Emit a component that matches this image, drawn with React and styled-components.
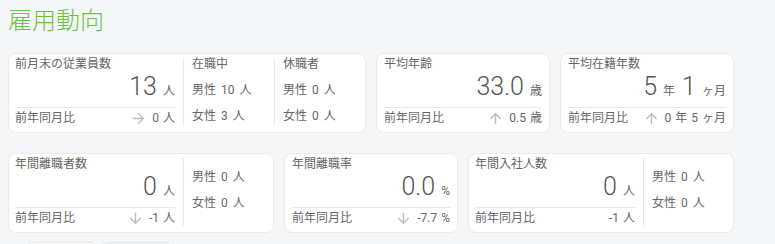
import React from "react";
import styled, { createGlobalStyle } from "styled-components";

const Global = createGlobalStyle`
  html, body { margin: 0; padding: 0; background: #f5f6f8; }
  body { font-family: Roboto, "Noto Sans CJK JP", sans-serif; color: #666; }
`;

const Page = styled.div`
  padding: 4px 8px 0 8px;
  width: 775px;
  box-sizing: border-box;
  height: 244px;
  overflow: hidden;
`;

const Heading = styled.h1`
  margin: 0;
  font-family: "Noto Sans CJK JP", sans-serif;
  font-weight: 300;
  font-size: 24px;
  line-height: 30px;
  color: #6cc04a;
`;

const Rows = styled.div`
  margin-top: 19px;
  display: flex;
  flex-direction: column;
  gap: 20px;
`;

const Row = styled.div`
  display: flex;
  gap: 10px;
`;

const Card = styled.div`
  flex: 0 0 ${(p) => p.$w}px;
  height: 80px;
  box-sizing: border-box;
  background: #fff;
  border: 1px solid #e9ebee;
  border-radius: 8px;
  display: flex;
`;

const Main = styled.div`
  box-sizing: border-box;
  ${(p) => (p.$hasSub ? "flex: 0 0 174px; padding: 0 8px 0 6px;" : "flex: 1; padding: 0 7px;")}
  display: flex;
  flex-direction: column;
`;

const Title = styled.div`
  font-size: 12px;
  line-height: 20px;
  color: #666;
`;

const Value = styled.div`
  display: flex;
  justify-content: flex-end;
  align-items: baseline;
  line-height: 26px;
  height: 26px;
`;

const Big = styled.span`
  font-family: Roboto, sans-serif;
  font-weight: 300;
  font-size: 25px;
  color: #555;
`;

const Unit = styled.span`
  font-size: 12px;
  color: #666;
  margin: 0 ${(p) => (p.$last ? 0 : 7)}px 0 6px;
`;

const Compare = styled.div`
  margin-top: 7px;
  border-top: 1px solid #e6e8eb;
  display: flex;
  justify-content: space-between;
  align-items: center;
  font-size: 12px;
  line-height: 20px;
  color: #666;
`;

const Delta = styled.span`
  display: flex;
  align-items: center;
  gap: 5px;
  white-space: pre;
  word-spacing: 1px;
`;

const Sub = styled.div`
  flex: 1;
  margin: 4px 0 6px;
  padding: 0 0 4px 8px;
  border-left: 1px solid #e6e8eb;
  display: flex;
  flex-direction: column;
  justify-content: center;
`;

const SubLine = styled.div`
  font-size: 12px;
  line-height: 26px;
  color: #666;
  white-space: pre;
  word-spacing: 2px;
`;

const Tabs = styled.div`
  margin-top: 9px;
  padding-left: 19px;
  display: flex;
  gap: 5px;
`;

const Tab = styled.div`
  width: ${(p) => p.$w}px;
  height: 28px;
  box-sizing: border-box;
  border: 1px solid #e4e6e9;
  border-radius: 6px 6px 0 0;
  background: ${(p) => (p.$active ? "#ffffff" : "#eef0f3")};
`;

const paths = {
  right: "M12 4l-1.41 1.41L16.17 11H4v2h12.17l-5.58 5.59L12 20l8-8z",
  up: "M4 12l1.41 1.41L11 7.83V20h2V7.83l5.58 5.59L20 12l-8-8-8 8z",
  down: "M20 12l-1.41-1.41L13 16.17V4h-2v12.17l-5.58-5.59L4 12l8 8 8-8z",
};

const Arrow = ({ dir }) => (
  <svg width="17" height="17" viewBox="0 0 24 24" fill="#b8bec6">
    <path d={paths[dir]} />
  </svg>
);

function StatCard({ w, title, value, delta, arrow, subs }) {
  const hasSub = subs && subs.length > 0;
  return (
    <Card $w={w}>
      <Main $hasSub={hasSub}>
        <Title>{title}</Title>
        <Value>
          {value.map((v, i) =>
            v.big ? (
              <Big key={i}>{v.t}</Big>
            ) : (
              <Unit key={i} $last={i === value.length - 1}>
                {v.t}
              </Unit>
            )
          )}
        </Value>
        <Compare>
          <span>前年同月比</span>
          <Delta>
            {arrow && <Arrow dir={arrow} />}
            {delta}
          </Delta>
        </Compare>
      </Main>
      {hasSub &&
        subs.map((s, i) => (
          <Sub key={i}>
            {s.map((line, j) => (
              <SubLine key={j}>{line}</SubLine>
            ))}
          </Sub>
        ))}
    </Card>
  );
}

export default function App() {
  return (
    <>
      <Global />
      <Page>
        <Heading>雇用動向</Heading>
        <Rows>
          <Row>
            <StatCard
              w={358}
              title="前月末の従業員数"
              value={[{ t: "13", big: true }, { t: "人" }]}
              arrow="right"
              delta="0 人"
              subs={[
                ["在職中", "男性 10 人", "女性 3 人"],
                ["休職者", "男性 0 人", "女性 0 人"],
              ]}
            />
            <StatCard
              w={174}
              title="平均年齢"
              value={[{ t: "33.0", big: true }, { t: "歳" }]}
              arrow="up"
              delta="0.5 歳"
            />
            <StatCard
              w={174}
              title="平均在籍年数"
              value={[
                { t: "5", big: true },
                { t: "年" },
                { t: "1", big: true },
                { t: "ヶ月" },
              ]}
              arrow="up"
              delta="0 年 5 ヶ月"
            />
          </Row>
          <Row>
            <StatCard
              w={266}
              title="年間離職者数"
              value={[{ t: "0", big: true }, { t: "人" }]}
              arrow="down"
              delta="-1 人"
              subs={[["男性 0 人", "女性 0 人"]]}
            />
            <StatCard
              w={174}
              title="年間離職率"
              value={[{ t: "0.0", big: true }, { t: "%" }]}
              arrow="down"
              delta="-7.7 %"
            />
            <StatCard
              w={266}
              title="年間入社人数"
              value={[{ t: "0", big: true }, { t: "人" }]}
              delta="-1 人"
              subs={[["男性 0 人", "女性 0 人"]]}
            />
          </Row>
        </Rows>
        <Tabs>
          <Tab $w={69} $active />
          <Tab $w={71} />
        </Tabs>
      </Page>
    </>
  );
}
